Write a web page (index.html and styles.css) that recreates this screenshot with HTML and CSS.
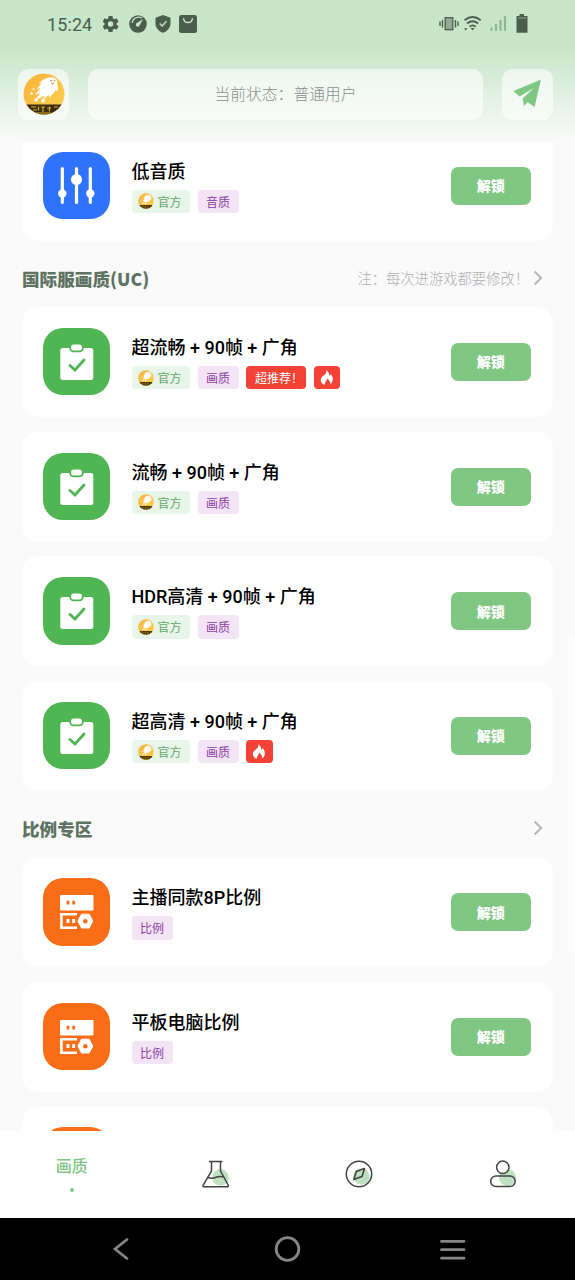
FILE: index.html
```
<!DOCTYPE html>
<html lang="zh-CN">
<head>
<meta charset="utf-8">
<title>画质</title>
<link rel="stylesheet" href="styles.css">
</head>
<body>
<svg class="defs" aria-hidden="true">
  <defs>
    <linearGradient id="gold" x1="0" y1="0" x2="1" y2="1"><stop offset="0" stop-color="#fbb13c"/><stop offset="1" stop-color="#fbd24c"/></linearGradient>
    <clipPath id="disc"><circle cx="21" cy="21" r="20.5"/></clipPath>
  </defs>
  <symbol id="logo" viewBox="0 0 42 42">
    <g clip-path="url(#disc)">
      <rect width="42" height="42" fill="url(#gold)"/>
      <path d="M3 31.500 H39 L36 42 H6Z" fill="#3a2c0c"/>
      <path d="M8 34h5M10 37h4M15.500 33.500v4M18 34h4M20 34v5M24 35h4M26.500 33.500v5M31 34h4M13 40h15" stroke="#d9ab2c" stroke-width="1.2" fill="none"/>
    </g>
    <path d="M26 4.500C31 3.800 34.500 6 34.300 10C34.200 13 35.500 14.500 34.500 18L32.500 17.500C31 20.500 28 22 26.500 25L26 22L20 26.500L21.500 22.500L11.500 28L17 20.500L12 21.500L17.500 15L13.500 16L18.500 10.500L16 10.500C19 7 22 5 26 4.500Z" fill="#fff"/>
    <circle cx="10.500" cy="16" r="1" fill="#fff"/><circle cx="8.500" cy="20.500" r="1.200" fill="#fff"/><circle cx="20" cy="27.800" r="2" fill="#fff"/><circle cx="13" cy="27" r="1.700" fill="#fff"/>
    <path d="M27.200 7.500h1.800M30.800 7.500h1.500M28 10.200q1.500 1.300 3 0" stroke="#d07a20" stroke-width=".9" fill="none"/>
  </symbol>
  <symbol id="sliders" viewBox="0 0 67 67">
    <path d="M19.300 16.500V50.500M33.500 16.500V50.500M47.300 16.500V50.500" stroke="#fff" stroke-width="3.200" stroke-linecap="round"/>
    <circle cx="19.300" cy="41.500" r="4.200" fill="#fff"/><circle cx="33.500" cy="27.500" r="5.500" fill="#fff"/><circle cx="47.300" cy="41.500" r="4.200" fill="#fff"/>
  </symbol>
  <symbol id="clip" viewBox="0 0 67 67">
    <rect x="17.300" y="20" width="33" height="32" rx="2.500" fill="#fff"/>
    <rect x="27.200" y="15.700" width="12.600" height="7.600" rx="3.400" fill="#fff" stroke="#50b653" stroke-width="1.800"/>
    <path d="M27 37.500L32 42L41 32" stroke="#50b653" stroke-width="2.800" fill="none" stroke-linecap="round"/>
  </symbol>
  <symbol id="server" viewBox="0 0 67 67">
    <rect x="17" y="17" width="33.500" height="15.500" rx="1.200" fill="#fff"/>
    <path d="M25 22.800v3.800M30.700 22.800v3.800" stroke="#f96d16" stroke-width="2.800"/>
    <path d="M34 36.200H18.400V49.700H34" fill="none" stroke="#fff" stroke-width="2.600"/>
    <path d="M25 41v4M30.700 41v4" stroke="#fff" stroke-width="3"/>
    <path d="M38.500 36.200H46.200L49.800 43L46.200 50H38.500L34.900 43Z" fill="#fff" stroke="#fff" stroke-width="1" stroke-linejoin="round"/>
    <circle cx="42.300" cy="43.200" r="2.300" fill="#f96d16"/>
  </symbol>
  <symbol id="fire" viewBox="0 0 14 16">
    <path d="M6.200 .5C9.400 1.800 9 4.400 9.200 5.800Q10.300 5.300 10.400 4.100C13.400 6.600 14 11.500 10.200 14.700C10.700 12 9.200 10.300 7.200 8.500C7 10.900 5 11.300 4.600 14.900C.6 13.400 0 9.800 1.600 7.400C3.700 4.900 6.900 4.200 6.200 .5Z" fill="#fff"/>
  </symbol>
  <symbol id="chev" viewBox="0 0 10 16"><path d="M1.500 1.500L8.200 8L1.500 14.500" fill="none" stroke="#b5b5b5" stroke-width="2"/></symbol>
</svg>
<div class="screen">
  <header class="top">
    <div class="status">
      <span class="time">15:24</span>
      <svg class="gear" viewBox="3 2.500 19 19" width="16" height="16"><path fill="#4b5e4c" fill-rule="evenodd" d="M19.140 12.940c.04-.3.060-.61.060-.94s-.02-.64-.07-.94l2.030-1.580c.18-.14.23-.41.120-.61l-1.920-3.320c-.12-.22-.37-.29-.59-.22l-2.390.960c-.5-.38-1.030-.7-1.620-.94l-.36-2.540c-.04-.24-.24-.41-.48-.41h-3.840c-.24 0-.43.170-.47.410l-.36 2.540c-.59.240-1.130.570-1.620.940l-2.390-.96c-.22-.08-.47 0-.59.220L2.740 8.870c-.12.210-.08.470.120.610l2.030 1.580c-.05.3-.09.630-.09.940s.02.640.070.940l-2.030 1.580c-.18.140-.23.410-.12.610l1.920 3.320c.12.220.37.290.59.220l2.390-.96c.5.380 1.030.7 1.620.940l.36 2.540c.05.240.24.410.48.410h3.840c.24 0 .44-.17.470-.41l.36-2.540c.59-.24 1.130-.56 1.620-.94l2.390.960c.22.080.47 0 .59-.22l1.920-3.320c.12-.22.070-.47-.12-.61l-2.010-1.580zM12 15.200a3.200 3.200 0 1 1 0-6.400 3.200 3.200 0 0 1 0 6.400z"/></svg>
      <svg class="gauge" viewBox="0 0 18 18" width="18" height="18"><circle cx="9" cy="9" r="8.800" fill="#4b5e4c"/><path d="M3.200 8A6.500 6.500 0 0 1 13 3" fill="none" stroke="#c8e6c9" stroke-width="1.200"/><path d="M14 4.300L10.800 10A2 2 0 1 1 8.300 7.800Z" fill="#c8e6c9"/></svg>
      <svg class="shield" viewBox="0 0 16 18" width="16" height="18"><path d="M8 0L15.500 2.800V8.500C15.500 13 12 16.500 8 17.800C4 16.500.5 13 .5 8.500V2.800Z" fill="#4b5e4c"/><path d="M4.700 8.500L7.200 11L11.500 6.300" stroke="#c8e6c9" stroke-width="1.300" fill="none"/></svg>
      <svg class="bag" viewBox="0 0 18 18" width="18" height="18"><rect width="18" height="18" rx="2.500" fill="#4b5e4c"/><path d="M4.500 3.200C5 9 13 9 13.500 3.200" stroke="#c8e6c9" stroke-width="1.500" fill="none"/></svg>
      <svg class="signals" viewBox="0 0 90 20" width="90" height="20">
        <rect x="6.200" y="3.700" width="7.600" height="12" fill="#93aa94" stroke="#4b5e4c" stroke-width="1.300"/>
        <path d="M3.500 6v7.500M1 7.500v4.500M16.500 6v7.500M19 7.500v4.500" stroke="#4b5e4c" stroke-width="1.400"/>
        <path d="M25.500 6.200Q33.500 -.2 41.700 6.200M28 9.500Q33.500 5 39.200 9.500M30.500 12.700Q33.500 10 36.700 12.700" fill="none" stroke="#4b5e4c" stroke-width="1.800"/>
        <path d="M31.600 14h4L33.600 16.500ZM25 14.200h3.500L26.700 16.500Z" fill="#4b5e4c"/>
        <path d="M52.500 13.500v3.200M57 10v6.700M61.500 6v10.700M66 2.200v14.500" stroke="#93b395" stroke-width="2.200"/>
        <path d="M80.500 0h4.500v2h3.500V18.700h-11V2H80.500Z" fill="#4b5e4c"/><path d="M79 4h8" stroke="#93aa94"/>
      </svg>
    </div>
    <div class="bar">
      <div class="tile"><svg width="42" height="42"><use href="#logo"/></svg></div>
      <div class="state"><span>当前状态：普通用户</span></div>
      <div class="tile plane"><svg width="28" height="28" viewBox="0 0 28 28"><path d="M28 .5L21.500 28L14.500 23L11 27.300L9.700 19.500L21 9L6.500 17.500L.5 12Z" fill="#81c784"/></svg></div>
    </div>
  </header>

  <main class="list">
    <article class="card first">
      <div class="app blue"><svg width="67" height="67"><use href="#sliders"/></svg></div>
      <div class="info"><h3>低音质</h3><div class="tags"><span class="tag official"><svg width="16" height="16"><use href="#logo"/></svg>官方</span><span class="tag kind">音质</span></div></div>
      <button class="unlock">解锁</button>
    </article>
    <div class="section"><h2>国际服画质(UC)</h2><span class="note">注：每次进游戏都要修改！</span><svg width="10" height="16"><use href="#chev"/></svg></div>
    <div class="group">
      <article class="card">
        <div class="app green"><svg width="67" height="67"><use href="#clip"/></svg></div>
        <div class="info"><h3>超流畅 + 90帧 + 广角</h3><div class="tags"><span class="tag official"><svg width="16" height="16"><use href="#logo"/></svg>官方</span><span class="tag kind">画质</span><span class="tag hot">超推荐！</span><span class="tag flame"><svg width="14" height="16"><use href="#fire"/></svg></span></div></div>
        <button class="unlock">解锁</button>
      </article>
      <article class="card">
        <div class="app green"><svg width="67" height="67"><use href="#clip"/></svg></div>
        <div class="info"><h3>流畅 + 90帧 + 广角</h3><div class="tags"><span class="tag official"><svg width="16" height="16"><use href="#logo"/></svg>官方</span><span class="tag kind">画质</span></div></div>
        <button class="unlock">解锁</button>
      </article>
      <article class="card">
        <div class="app green"><svg width="67" height="67"><use href="#clip"/></svg></div>
        <div class="info"><h3>HDR高清 + 90帧 + 广角</h3><div class="tags"><span class="tag official"><svg width="16" height="16"><use href="#logo"/></svg>官方</span><span class="tag kind">画质</span></div></div>
        <button class="unlock">解锁</button>
      </article>
      <article class="card">
        <div class="app green"><svg width="67" height="67"><use href="#clip"/></svg></div>
        <div class="info"><h3>超高清 + 90帧 + 广角</h3><div class="tags"><span class="tag official"><svg width="16" height="16"><use href="#logo"/></svg>官方</span><span class="tag kind">画质</span><span class="tag flame"><svg width="14" height="16"><use href="#fire"/></svg></span></div></div>
        <button class="unlock">解锁</button>
      </article>
    </div>
    <div class="section"><h2>比例专区</h2><svg width="10" height="16"><use href="#chev"/></svg></div>
    <div class="group">
      <article class="card">
        <div class="app orange"><svg width="67" height="67"><use href="#server"/></svg></div>
        <div class="info"><h3>主播同款8P比例</h3><div class="tags"><span class="tag kind">比例</span></div></div>
        <button class="unlock">解锁</button>
      </article>
      <article class="card">
        <div class="app orange"><svg width="67" height="67"><use href="#server"/></svg></div>
        <div class="info"><h3>平板电脑比例</h3><div class="tags"><span class="tag kind">比例</span></div></div>
        <button class="unlock">解锁</button>
      </article>
      <article class="card"><div class="app orange"></div></article>
    </div>
    <div class="thumb"></div>
  </main>

  <nav class="tabs">
    <div class="tab active"><span>画质</span><i></i></div>
    <div class="tab"><svg width="30" height="30" viewBox="0 0 30 30"><circle cx="19.500" cy="18.500" r="8.300" fill="#bfe0c1"/><path d="M8 2.500H21.500M10.500 2.500V12L2.200 26Q1.500 27.800 3 27.800H26.500Q28 27.800 27.200 26L19.500 12V2.500M7 18.500Q11 20 14.500 18.500T23 18" fill="none" stroke="#444" stroke-width="1.500"/></svg></div>
    <div class="tab"><svg width="30" height="30" viewBox="0 0 30 30"><circle cx="17.500" cy="17.500" r="8.300" fill="#bfe0c1"/><circle cx="15" cy="15" r="12.700" fill="none" stroke="#444" stroke-width="1.500"/><path d="M20.500 9.500L18 17.500L9.800 20.500L12.300 12.500Z" fill="none" stroke="#444" stroke-width="1.600" stroke-linejoin="round"/></svg></div>
    <div class="tab"><svg width="30" height="30" viewBox="0 0 30 30"><circle cx="19.500" cy="18.500" r="8.500" fill="#bfe0c1"/><circle cx="14.800" cy="8.300" r="6.200" fill="#fff" stroke="#444" stroke-width="1.500"/><rect x="2.700" y="17" width="24.500" height="10.500" rx="5.200" fill="none" stroke="#444" stroke-width="1.500"/></svg></div>
  </nav>

  <footer class="system">
    <svg width="575" height="62" viewBox="0 0 575 62" fill="none" stroke="#858585" stroke-width="2.800" stroke-linecap="round"><path d="M127 21.500L115 31L127 40.500"/><circle cx="287.500" cy="31" r="11.300"/><path d="M441.500 23.300H464M441.500 31.700H464M441.500 40.200H464"/></svg>
  </footer>
</div>
</body>
</html>
```
FILE: styles.css
```
* { box-sizing: border-box; }
body { margin: 0; font-family: Roboto, "Noto Sans CJK SC", sans-serif; }
.defs { position: absolute; width: 0; height: 0; }
.screen { width: 575px; height: 1280px; display: flex; flex-direction: column; overflow: hidden; background: #fafafa; }
svg { display: block; flex: none; }

.top { height: 142px; flex: none; background: linear-gradient(#c8e6c9 0, #c8e6c9 48px, #fafafa 142px); }
.status { height: 48px; padding: 0 46px 0 47px; display: flex; align-items: center; color: #4b5e4c; }
.time { width: 56px; font-size: 18px; letter-spacing: .1px; }
.gauge { margin-left: 10px; }
.shield { margin-left: 8px; }
.bag { margin-left: 8px; }
.signals { margin-left: auto; }
.bar { display: flex; gap: 19px; padding: 21px 22px 0 18px; }
.tile, .state { height: 51px; border-radius: 11px; background: rgba(255, 255, 255, .6); display: flex; align-items: center; justify-content: center; }
.tile { width: 51px; flex: none; padding-bottom: 1px; }
.plane { padding-bottom: 3px; padding-right: 1px; }
.state { flex: 1; padding-bottom: 2px; font-size: 15.800px; font-weight: 300; color: #8f8f8f; font-family: "Noto Sans CJK SC", sans-serif; }

.list { position: relative; flex: 1; min-height: 0; overflow: hidden; padding: 0 22px; }
.card { height: 110px; padding: 20.700px 22px 0 20.500px; border-radius: 16px; background: #fff; display: flex; align-items: flex-start; }
.first { margin-top: -11px; }
.group { display: flex; flex-direction: column; gap: 14.600px; }
.app { width: 67.500px; height: 67.500px; border-radius: 20px; flex: none; }
.blue { background: #2f73fc; }
.green { background: #50b653; }
.orange { background: #f96d16; }
.info { flex: 1; margin-left: 21.500px; padding-top: 7px; }
h3 { margin: 0; font-size: 18px; line-height: 26px; font-weight: 500; color: #000; white-space: nowrap; }
.tags { display: flex; gap: 7.500px; margin-top: 5px; }
.tag { height: 23.500px; border-radius: 4px; padding: 0 8.500px; font-size: 12px; display: flex; align-items: center; white-space: nowrap; }
.official { background: #e8f5e9; color: #66a869; padding: 0 8.500px 0 6px; gap: 4px; }
.kind { background: #f3e5f5; color: #8e3fa5; }
.hot { width: 60px; background: #f44336; color: #fff; padding: 0 0 0 9px; }
.flame { width: 26.500px; padding: 0; justify-content: center; background: #f44336; }
.unlock { width: 80.500px; height: 38px; margin: 15px 0 0; border: 0; border-radius: 7px; background: #81c784; color: #fff; font: 900 14px "Noto Sans CJK SC", sans-serif; padding: 0 0 1px; }
.section { height: 66.300px; padding-right: 10px; display: flex; align-items: center; padding-top: 8px; }
h2 { margin: 2px auto 0 0; font-family: "Noto Sans CJK SC", sans-serif; font-size: 17.600px; font-weight: 900; line-height: 26px; color: #5f7363; }
.note { margin-top: -2px; font: 300 14.300px "Noto Sans CJK SC", sans-serif; color: #b0b0b0; }
.note + svg { margin-left: 4px; }
.thumb { position: absolute; right: 0; top: 492px; width: 7px; height: 318px; background: #fcfcfc; }

.tabs { height: 87px; flex: none; padding-bottom: 2px; background: #fff; display: grid; grid-template-columns: repeat(4, 1fr); }
.tab { display: flex; align-items: center; justify-content: center; }
.active { flex-direction: column; color: #81c784; font-size: 16px; font-weight: 500; line-height: 24px; gap: 9px; }
.active i { width: 4px; height: 4px; border-radius: 50%; background: #81c784; }
.system { height: 62px; flex: none; background: #000; }
```
